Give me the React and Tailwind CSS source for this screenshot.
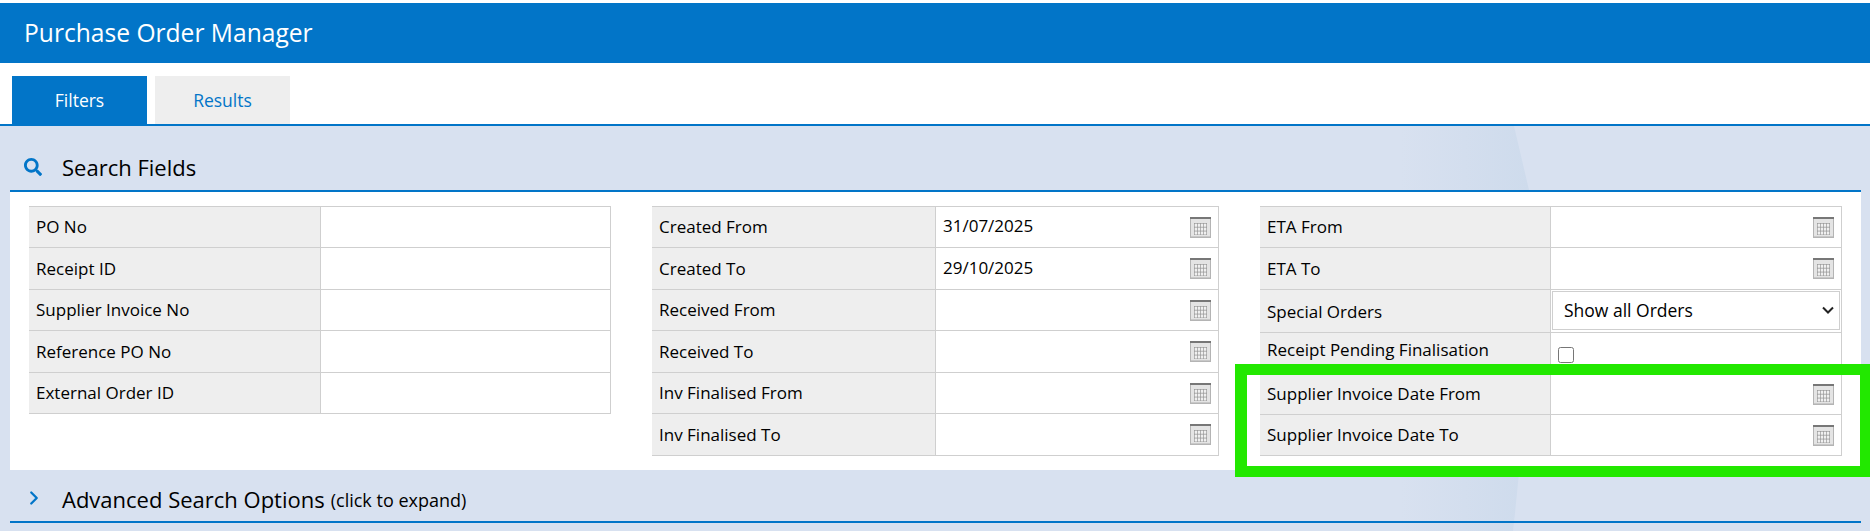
import React from 'react';
import { FaSearch } from 'react-icons/fa';
import { ChevronRight } from 'lucide-react';

const CalendarIcon = () => (
  <svg width="21" height="21" viewBox="0 0 21 21" className="shrink-0">
    <rect x="0" y="0" width="21" height="21" fill="#b4b4b4" />
    <rect x="1" y="2" width="19" height="18" fill="#e4e4e4" />
    <rect x="0" y="0" width="21" height="2" fill="#777777" />
    <rect x="1" y="19" width="19" height="1" fill="#c8c8c8" />
    <rect x="4" y="6" width="13" height="12" fill="#8f8f8f" />
    {[0, 1, 2, 3].map((c) =>
      [0, 1, 2].map((r) => (
        <rect key={`${c}-${r}`} x={4.6 + c * 3.1} y={6.6 + r * 3.9} width="2.5" height="3.2" fill="#f0f0f0" />
      ))
    )}
  </svg>
);

const Row = ({ label, value, date, height, labelWidth, children }) => (
  <div className={`flex border-b border-[#cfcfcf] ${height}`}>
    <div className={`${labelWidth} shrink-0 bg-[#eeeeee] pl-[7px] border-r border-[#cfcfcf] flex items-center`}>
      {label}
    </div>
    <div className="flex-1 min-w-0 flex items-center border-r border-[#cfcfcf]">
      {children || (
        <>
          <input
            type="text"
            defaultValue={value || ''}
            className="flex-1 min-w-0 pl-[7px] -mt-[2px] outline-none bg-transparent"
          />
          {date && <span className="mr-[7px]"><CalendarIcon /></span>}
        </>
      )}
    </div>
  </div>
);

const FieldTable = ({ width, children }) => (
  <div className={`${width} shrink-0 border-t border-[#cfcfcf] h-fit`}>{children}</div>
);

const col1 = ['PO No', 'Receipt ID', 'Supplier Invoice No', 'Reference PO No', 'External Order ID'];
const col2 = [
  ['Created From', '31/07/2025'],
  ['Created To', '29/10/2025'],
  ['Received From', ''],
  ['Received To', ''],
  ['Inv Finalised From', ''],
  ['Inv Finalised To', ''],
];

const App = () => {
  return (
    <div className="relative w-[1870px] h-[531px] overflow-hidden bg-white text-black text-[17px] font-['Open_Sans',sans-serif]">
      <div className="pt-[3px]">
        <div className="h-[60px] bg-[#0275c8] text-white text-[24.6px] pl-[24px] flex items-center">
          Purchase Order Manager
        </div>
      </div>

      <div className="flex gap-[8px] pl-[12px] pt-[13px] h-[61px] bg-white text-[17.5px]">
        <div className="w-[135px] bg-[#0275c8] text-white flex items-center justify-center">Filters</div>
        <div className="w-[135px] bg-[#eeeeee] text-[#0275c8] flex items-center justify-center">Results</div>
      </div>

      <div className="relative h-[407px] bg-[#d8e1f0] border-t-2 border-[#0275c8]">
        <svg width="1870" height="405" className="absolute left-0 top-0" aria-hidden="true">
          <defs>
            <linearGradient id="swoosh" x1="0" x2="1" y1="0" y2="0">
              <stop offset="0" stopColor="#cedbec" stopOpacity="0" />
              <stop offset="1" stopColor="#cedbec" />
            </linearGradient>
          </defs>
          <path d="M1400 0 L1514 0 L1529 64 Q1532 240 1513 405 L1400 405 Z" fill="url(#swoosh)" />
        </svg>

        <div className="relative pl-[10px] pr-[9px]">
          <div className="h-[66px] pt-[20px] border-b-2 border-[#0275c8] flex items-center text-[22px]">
            <FaSearch className="ml-[14px] mr-[20px] text-[#0275c8] text-[18px] -mt-[2px]" />
            <span className="-mt-[1px]">Search Fields</span>
          </div>

          <div className="h-[278px] bg-white pl-[19px] pr-[19px] pt-[14px] flex justify-between">
            <FieldTable width="w-[582px]">
              {col1.map((label, i) => (
                <Row
                  key={label}
                  label={label}
                  labelWidth="w-[292px]"
                  height={i % 2 === 0 ? 'h-[41px]' : 'h-[42px]'}
                />
              ))}
            </FieldTable>

            <FieldTable width="w-[567px]">
              {col2.map(([label, value], i) => (
                <Row
                  key={label}
                  label={label}
                  value={value}
                  date
                  labelWidth="w-[284px]"
                  height={i % 2 === 0 ? 'h-[41px]' : 'h-[42px]'}
                />
              ))}
            </FieldTable>

            <FieldTable width="w-[582px]">
              <Row label="ETA From" date labelWidth="w-[291px]" height="h-[41px]" />
              <Row label="ETA To" date labelWidth="w-[291px]" height="h-[42px]" />
              <Row label={<span className="mt-[1px]">Special Orders</span>} labelWidth="w-[291px]" height="h-[43px]">
                <div className="relative ml-[1px] -mt-[1px]">
                  <select
                    defaultValue="all"
                    className="appearance-none block w-[288px] h-[39px] pl-[11px] bg-white border border-[#cfcfcf] outline-none text-[17.5px]"
                  >
                    <option value="all">Show all Orders</option>
                  </select>
                  <svg
                    width="12"
                    height="8"
                    viewBox="0 0 12 8"
                    className="absolute right-[6px] top-[15px] pointer-events-none"
                  >
                    <path d="M1 1.5 L6 6.5 L11 1.5" fill="none" stroke="#222" strokeWidth="2" />
                  </svg>
                </div>
              </Row>
              <Row label={<span className="-mt-[7px]">Receipt Pending Finalisation</span>} labelWidth="w-[291px]" height="h-[41px]">
                <input type="checkbox" className="ml-[7px] mt-[3px] w-4 h-4" />
              </Row>
              <Row label="Supplier Invoice Date From" date labelWidth="w-[291px]" height="h-[41px]" />
              <Row label="Supplier Invoice Date To" date labelWidth="w-[291px]" height="h-[41px]" />
            </FieldTable>
          </div>

          <div className="h-[53px] pt-[8px] border-b-2 border-[#0275c8] flex items-center">
            <ChevronRight className="ml-[13px] mr-[17px] -mt-[4px] text-[#0275c8]" size={22} strokeWidth={2.5} />
            <span className="text-[22px]">Advanced Search Options</span>
            <span className="ml-[6px] text-[18px] mt-[2px]">(click to expand)</span>
          </div>
        </div>
      </div>

      {/* annotation box from the screenshot */}
      <div className="absolute left-[1235px] top-[364px] w-[635px] h-[113px] border-[#22e800] border-t-[11px] border-b-[11px] border-l-[12px] border-r-[10px] pointer-events-none" />
    </div>
  );
};

export default App;
